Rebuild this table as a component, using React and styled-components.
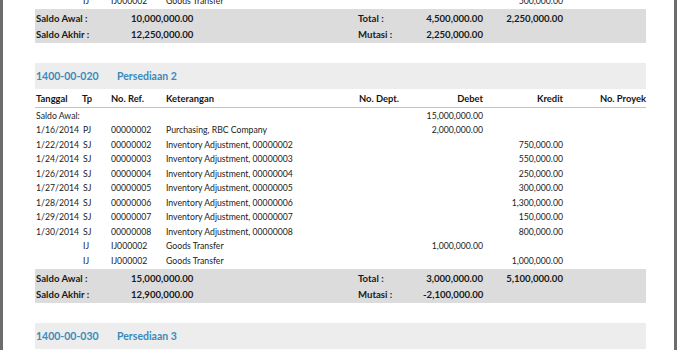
import React from "react";
import styled, { createGlobalStyle } from "styled-components";

const Global = createGlobalStyle`
  html, body { margin: 0; padding: 0; background: #ffffff; }
  body { font-family: Lato, "Liberation Sans", sans-serif; }
`;

const Frame = styled.div`
  width: 680px;
  height: 350px;
  overflow: hidden;
  background: #fff;
`;

const Sheet = styled.div`
  box-sizing: border-box;
  width: 677px;
  height: 350px;
  border-left: 3px solid #6c6c6c;
  border-right: 3px solid #6c6c6c;
  padding-left: 32px;
  overflow: hidden;
`;

const Report = styled.div`
  width: 611px;
  margin-top: -7px;
  display: flex;
  flex-direction: column;
  gap: 20px;
`;

const Section = styled.section`
  display: flex;
  flex-direction: column;
`;

const COLS = "46px 29px 55px 193px 65px 60px 80px 83px";

const TitleBar = styled.div`
  height: 26px;
  background: #ededed;
  display: grid;
  grid-template-columns: 81px 1fr;
  align-items: center;
  padding-left: 1px;
  font-size: 10.5px;
  font-weight: 700;
  color: #3a8abd;
`;

const HeadRow = styled.div`
  display: grid;
  grid-template-columns: ${COLS};
  height: 18px;
  align-items: center;
  border-bottom: 1px solid #c4c4c4;
  font-size: 9.4px;
  font-weight: 700;
  color: #161616;
`;

const Row = styled.div`
  display: grid;
  grid-template-columns: ${COLS};
  height: 14.5px;
  align-items: center;
  font-size: 8.7px;
  color: #222222;
`;

const Cell = styled.div`
  white-space: nowrap;
  text-align: ${(p) => (p.$right ? "right" : "left")};
  padding-left: ${(p) => (p.$right ? "0" : p.$pad || "1px")};
  grid-column: ${(p) => (p.$span ? `span ${p.$span}` : "auto")};
`;

const Totals = styled.div`
  margin-top: 1.5px;
  background: #dcdcdc;
  padding: 1px 0;
  display: grid;
  grid-template-columns: 95px 227px 66px 60px 80px 83px;
  grid-auto-rows: 16px;
  align-items: center;
  font-size: 9.6px;
  font-weight: 700;
  color: #1a1a1a;
`;

const TCell = styled.div`
  white-space: nowrap;
  text-align: ${(p) => (p.$right ? "right" : "left")};
  padding-left: ${(p) => (p.$right ? "0" : "1px")};
`;

const headers = ["Tanggal", "Tp", "No. Ref.", "Keterangan", "No. Dept."];

const section2Rows = [
  { date: "1/16/2014", tp: "PJ", ref: "00000002", desc: "Purchasing, RBC Company", debet: "2,000,000.00" },
  { date: "1/22/2014", tp: "SJ", ref: "00000002", desc: "Inventory Adjustment, 00000002", kredit: "750,000.00" },
  { date: "1/24/2014", tp: "SJ", ref: "00000003", desc: "Inventory Adjustment, 00000003", kredit: "550,000.00" },
  { date: "1/26/2014", tp: "SJ", ref: "00000004", desc: "Inventory Adjustment, 00000004", kredit: "250,000.00" },
  { date: "1/27/2014", tp: "SJ", ref: "00000005", desc: "Inventory Adjustment, 00000005", kredit: "300,000.00" },
  { date: "1/28/2014", tp: "SJ", ref: "00000006", desc: "Inventory Adjustment, 00000006", kredit: "1,300,000.00" },
  { date: "1/29/2014", tp: "SJ", ref: "00000007", desc: "Inventory Adjustment, 00000007", kredit: "150,000.00" },
  { date: "1/30/2014", tp: "SJ", ref: "00000008", desc: "Inventory Adjustment, 00000008", kredit: "800,000.00" },
  { date: "", tp: "IJ", ref: "IJ000002", desc: "Goods Transfer", debet: "1,000,000.00" },
  { date: "", tp: "IJ", ref: "IJ000002", desc: "Goods Transfer", kredit: "1,000,000.00" },
];

function DataRow({ r }) {
  return (
    <Row>
      <Cell>{r.date}</Cell>
      <Cell $pad="2px">{r.tp}</Cell>
      <Cell>{r.ref}</Cell>
      <Cell>{r.desc}</Cell>
      <Cell>{r.dept || ""}</Cell>
      <Cell $right>{r.debet || ""}</Cell>
      <Cell $right>{r.kredit || ""}</Cell>
      <Cell $right>{r.proyek || ""}</Cell>
    </Row>
  );
}

function TotalsBlock({ awal, akhir, tDebet, tKredit, mutasi }) {
  return (
    <Totals>
      <TCell>Saldo Awal :</TCell>
      <TCell>{awal}</TCell>
      <TCell>Total :</TCell>
      <TCell $right>{tDebet}</TCell>
      <TCell $right>{tKredit}</TCell>
      <TCell />
      <TCell>Saldo Akhir :</TCell>
      <TCell>{akhir}</TCell>
      <TCell>Mutasi :</TCell>
      <TCell $right>{mutasi}</TCell>
      <TCell />
      <TCell />
    </Totals>
  );
}

function Header() {
  return (
    <HeadRow>
      {headers.map((h) => (
        <Cell key={h}>{h}</Cell>
      ))}
      <Cell $right>Debet</Cell>
      <Cell $right>Kredit</Cell>
      <Cell $right>No. Proyek</Cell>
    </HeadRow>
  );
}

export default function App() {
  return (
    <>
      <Global />
      <Frame>
        <Sheet>
          <Report>
            <Section>
              <DataRow r={{ date: "", tp: "IJ", ref: "IJ000002", desc: "Goods Transfer", kredit: "500,000.00" }} />
              <TotalsBlock
                awal="10,000,000.00"
                akhir="12,250,000.00"
                tDebet="4,500,000.00"
                tKredit="2,250,000.00"
                mutasi="2,250,000.00"
              />
            </Section>
            <Section>
              <TitleBar>
                <span>1400-00-020</span>
                <span>Persediaan 2</span>
              </TitleBar>
              <Header />
              <Row>
                <Cell $span={5}>Saldo Awal:</Cell>
                <Cell $right>15,000,000.00</Cell>
                <Cell />
                <Cell />
              </Row>
              {section2Rows.map((r, i) => (
                <DataRow key={i} r={r} />
              ))}
              <TotalsBlock
                awal="15,000,000.00"
                akhir="12,900,000.00"
                tDebet="3,000,000.00"
                tKredit="5,100,000.00"
                mutasi="-2,100,000.00"
              />
            </Section>
            <Section>
              <TitleBar>
                <span>1400-00-030</span>
                <span>Persediaan 3</span>
              </TitleBar>
              <Header />
            </Section>
          </Report>
        </Sheet>
      </Frame>
    </>
  );
}
